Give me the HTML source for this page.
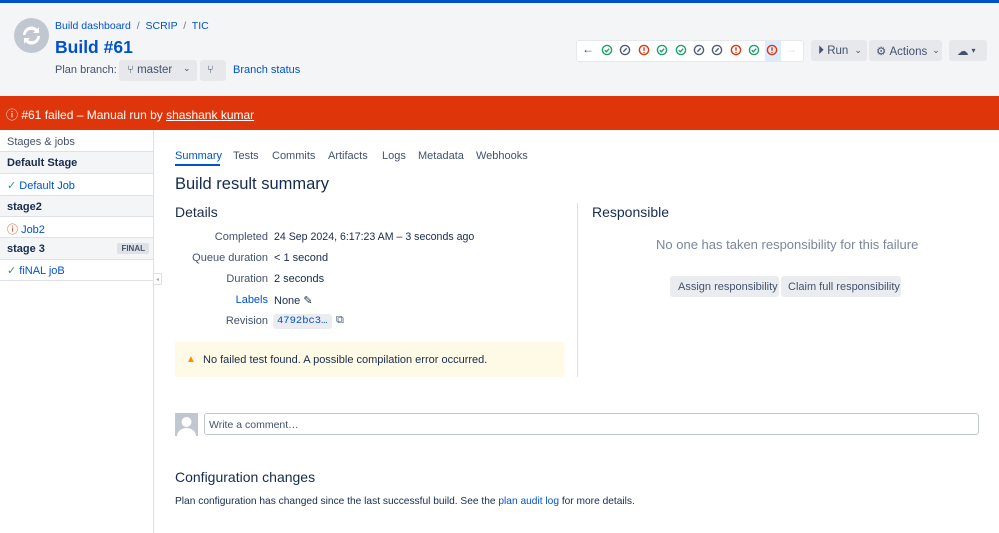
<!DOCTYPE html>
<html><head><meta charset="utf-8"><style>
*{box-sizing:border-box;margin:0;padding:0}
body{width:999px;height:533px;overflow:hidden;background:#fff;font-family:"Liberation Sans",sans-serif;color:#172b4d;position:relative;font-size:11px}
.a{position:absolute;white-space:nowrap}
.blue{color:#0052cc}
.btn{position:absolute;background:#e6e8ec;border-radius:3px;height:21px;top:40px;font-size:11.5px;color:#42526e;display:flex;align-items:center}
.row{position:absolute;left:0;width:153px;border-bottom:1px solid #dfe1e6;font-size:11px}
.lab{position:absolute;right:0;text-align:right;color:#42526e}
</style></head><body>
<div class="a" style="left:0;top:0;width:999px;height:3px;background:#0052cc"></div>
<div class="a" style="left:0;top:3px;width:999px;height:93px;background:#f4f5f7"></div>
<svg class="a" style="left:14px;top:18px" width="35" height="35" viewBox="0 0 35 35"><circle cx="17.5" cy="17.5" r="17.5" fill="#c1c7d0"/><path d="M9 17a8.5 8.5 0 0 1 14.5-6l1.5-2v6h-6l2-2a6 6 0 0 0-9.5 4z M26 18a8.5 8.5 0 0 1-14.5 6l-1.5 2v-6h6l-2 2a6 6 0 0 0 9.5-4z" fill="#fff"/></svg>
<div class="a blue" style="left:55px;top:20px;font-size:10.5px">Build dashboard <span style="color:#6b778c">&nbsp;/&nbsp;</span> SCRIP <span style="color:#6b778c">&nbsp;/&nbsp;</span> TIC</div>
<div class="a blue" style="left:55px;top:37px;font-size:17.5px;font-weight:bold;color:#0052cc">Build #61</div>
<div class="a" style="left:55px;top:64px;font-size:11px;color:#42526e">Plan branch:</div>
<div class="a" style="left:119px;top:60px;width:78px;height:21px;background:#e6e8ec;border-radius:3px;color:#42526e;font-size:11.5px;padding:4px 0 0 8px">⑂ master <span style="position:absolute;left:64px;top:3px;font-size:9px">⌄</span></div>
<div class="a" style="left:200px;top:60px;width:26px;height:21px;background:#e6e8ec;border-radius:3px;color:#42526e;font-size:11px;padding:4px 0 0 7px">⑂</div>
<div class="a blue" style="left:233px;top:64px;font-size:11px">Branch status</div>

<div class="a" style="left:576px;top:40px;width:228px;height:22px;background:#fff;border:1px solid #e6e8ec;border-radius:3px"></div>
<div class="a" style="left:765px;top:41px;width:16px;height:20px;background:#deebff"></div>
<div class="a" style="left:582px;top:42px;font-size:12px;color:#42526e">←</div>
<div class="a" style="left:785px;top:42px;font-size:12px;color:#dfe1e6">→</div>
<svg class="a" style="left:600px;top:44px" width="185" height="13">
<defs>
<g id="ok"><circle cx="6" cy="6" r="4.6" fill="none" stroke="#22a06b" stroke-width="1.4"/><path d="M3.8 6.2l1.6 1.5 2.8-3" fill="none" stroke="#22a06b" stroke-width="1.4"/></g>
<g id="sk"><circle cx="6" cy="6" r="4.6" fill="none" stroke="#505f79" stroke-width="1.4"/><path d="M4.3 7.7l3.4-3.4" stroke="#505f79" stroke-width="1.4"/></g>
<g id="er"><circle cx="6" cy="6" r="4.6" fill="none" stroke="#de350b" stroke-width="1.4"/><path d="M6 3.4v3.4M6 8v1" stroke="#de350b" stroke-width="1.4"/></g>
</defs>
<use href="#ok" x="1"/><use href="#sk" x="19"/><use href="#er" x="38"/><use href="#ok" x="56"/><use href="#ok" x="75"/><use href="#sk" x="93"/><use href="#sk" x="111"/><use href="#er" x="130"/><use href="#ok" x="148"/><use href="#er" x="166"/>
</svg>
<div class="btn" style="left:811px;width:56px;padding-left:7px"><span style="font-size:12px">⏵</span>&nbsp;Run <span style="font-size:9px;margin-left:6px">⌄</span></div>
<div class="btn" style="left:869px;width:73px;padding-left:7px">⚙&nbsp;Actions <span style="font-size:9px;margin-left:5px">⌄</span></div>
<div class="btn" style="left:949px;width:38px;padding-left:8px">☁ <span style="font-size:8px;margin-left:3px">▾</span></div>

<div class="a" style="left:0;top:96px;width:999px;height:34px;background:#de350b"></div>
<div class="a" style="left:6px;top:106px;font-size:12px;color:#fff">ⓘ #61 failed – Manual run by <span style="text-decoration:underline">shashank kumar</span></div>

<div class="a" style="left:153px;top:130px;width:1px;height:403px;background:#dfe1e6"></div>
<div class="a" style="left:153px;top:273px;width:9px;height:12px;border:1px solid #dfe1e6;background:#fff;font-size:6px;color:#a5adba;padding:2px 0 0 2px">◂</div>
<div class="row" style="top:130px;height:22px;padding:6px 0 0 7px;color:#42526e">Stages &amp; jobs</div>
<div class="row" style="top:152px;height:22px;background:#f4f5f7;padding:5px 0 0 7px;font-weight:bold">Default Stage</div>
<div class="row" style="top:174px;height:22px;padding:5px 0 0 7px"><span style="color:#22a06b">✓</span> <span class="blue">Default Job</span></div>
<div class="row" style="top:196px;height:21px;background:#f4f5f7;padding:5px 0 0 7px;font-weight:bold">stage2</div>
<div class="row" style="top:217px;height:21px;padding:4px 0 0 7px"><span style="color:#de350b">ⓘ</span> <span class="blue">Job2</span></div>
<div class="row" style="top:238px;height:22px;background:#f4f5f7;padding:5px 0 0 7px;font-weight:bold">stage 3<span style="position:absolute;right:4px;top:5px;background:#dfe1e6;font-size:8px;padding:1px 4px;border-radius:2px;color:#42526e">FINAL</span></div>
<div class="row" style="top:260px;height:21px;padding:4px 0 0 7px"><span style="color:#22a06b">✓</span> <span class="blue">fiNAL joB</span></div>

<div class="a" style="left:175px;top:150px;font-size:11px;color:#0052cc">Summary</div>
<div class="a" style="left:175px;top:164px;width:45px;height:2px;background:#0052cc"></div>
<div class="a" style="left:233px;top:150px;font-size:11px;color:#42526e">Tests</div>
<div class="a" style="left:272px;top:150px;font-size:11px;color:#42526e">Commits</div>
<div class="a" style="left:328px;top:150px;font-size:11px;color:#42526e">Artifacts</div>
<div class="a" style="left:382px;top:150px;font-size:11px;color:#42526e">Logs</div>
<div class="a" style="left:418px;top:150px;font-size:11px;color:#42526e">Metadata</div>
<div class="a" style="left:476px;top:150px;font-size:11px;color:#42526e">Webhooks</div>
<div class="a" style="left:175px;top:175px;font-size:16.5px">Build result summary</div>
<div class="a" style="left:175px;top:204px;font-size:14px">Details</div>
<div class="a" style="left:175px;top:231px;width:93px;height:100px">
<div class="lab" style="top:0">Completed</div>
<div class="lab" style="top:21px">Queue duration</div>
<div class="lab" style="top:42px">Duration</div>
<div class="lab blue" style="top:63px;color:#0052cc">Labels</div>
<div class="lab" style="top:84px">Revision</div>
</div>
<div class="a" style="left:274px;top:231px;font-size:10.6px">24 Sep 2024, 6:17:23 AM – 3 seconds ago</div>
<div class="a" style="left:274px;top:252px">&lt; 1 second</div>
<div class="a" style="left:274px;top:273px">2 seconds</div>
<div class="a" style="left:274px;top:294px">None ✎</div>
<div class="a" style="left:273px;top:314px;width:59px;height:15px;background:#ebecf0;border-radius:3px;font-family:'Liberation Mono',monospace;font-size:10.5px;color:#0052cc;padding:1px 0 0 4px">4792bc3…</div>
<div class="a" style="left:336px;top:314px;font-size:11px;color:#42526e">⧉</div>
<div class="a" style="left:175px;top:342px;width:389px;height:35px;background:#fffae6"></div>
<div class="a" style="left:186px;top:354px;font-size:10px;color:#ff8b00">▲</div>
<div class="a" style="left:203px;top:354px">No failed test found. A possible compilation error occurred.</div>
<div class="a" style="left:577px;top:203px;width:1px;height:174px;background:#dfe1e6"></div>
<div class="a" style="left:592px;top:204px;font-size:14px">Responsible</div>
<div class="a" style="left:656px;top:237px;font-size:13px;color:#7a869a">No one has taken responsibility for this failure</div>
<div class="a" style="left:670px;top:276px;width:109px;height:21px;background:#ebecf0;border-radius:3px;color:#42526e;padding:5px 0 0 8px">Assign responsibility</div>
<div class="a" style="left:781px;top:276px;width:120px;height:21px;background:#ebecf0;border-radius:3px;color:#42526e;padding:5px 0 0 7px">Claim full responsibility</div>

<svg class="a" style="left:175px;top:413px" width="23" height="23"><rect width="23" height="23" fill="#c1c7d0"/><circle cx="11.5" cy="9" r="5" fill="#fff"/><path d="M2 23a9.5 8 0 0 1 19 0z" fill="#fff"/></svg>
<div class="a" style="left:204px;top:413px;width:775px;height:22px;border:1px solid #c1c7d0;border-radius:3px;background:#fff;padding:5px 0 0 4px;color:#42526e;font-size:10.5px">Write a comment…</div>
<div class="a" style="left:175px;top:469px;font-size:14px">Configuration changes</div>
<div class="a" style="left:175px;top:496px;font-size:10.2px">Plan configuration has changed since the last successful build. See the <span class="blue">plan audit log</span> for more details.</div>
</body></html>
